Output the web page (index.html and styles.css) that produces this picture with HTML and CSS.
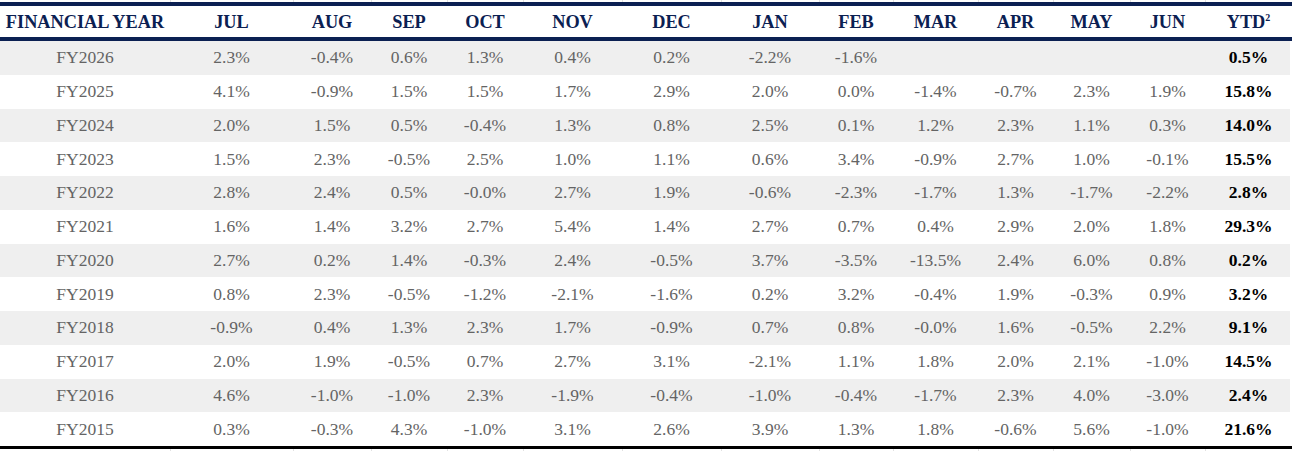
FILE: index.html
```html
<!DOCTYPE html>
<html lang="en">
<head>
<meta charset="utf-8">
<title>Monthly Returns</title>
<link rel="stylesheet" href="styles.css">
</head>
<body>
<table class="returns">
  <colgroup>
    <col class="c-year"><col class="c-jul"><col class="c-aug"><col class="c-sep"><col class="c-oct"><col class="c-nov"><col class="c-dec"><col class="c-jan"><col class="c-feb"><col class="c-mar"><col class="c-apr"><col class="c-may"><col class="c-jun"><col class="c-ytd">
  </colgroup>
  <thead>
    <tr class="edge"><td></td><td></td><td></td><td></td><td></td><td></td><td></td><td></td><td></td><td></td><td></td><td></td><td></td><td></td></tr>
    <tr class="head">
      <th>FINANCIAL YEAR</th><th>JUL</th><th>AUG</th><th>SEP</th><th>OCT</th><th>NOV</th><th>DEC</th><th>JAN</th><th>FEB</th><th>MAR</th><th>APR</th><th>MAY</th><th>JUN</th><th>YTD<sup>2</sup></th>
    </tr>
  </thead>
  <tbody>
    <tr><td>FY2026</td><td>2.3%</td><td>-0.4%</td><td>0.6%</td><td>1.3%</td><td>0.4%</td><td>0.2%</td><td>-2.2%</td><td>-1.6%</td><td></td><td></td><td></td><td></td><td class="ytd">0.5%</td></tr>
    <tr><td>FY2025</td><td>4.1%</td><td>-0.9%</td><td>1.5%</td><td>1.5%</td><td>1.7%</td><td>2.9%</td><td>2.0%</td><td>0.0%</td><td>-1.4%</td><td>-0.7%</td><td>2.3%</td><td>1.9%</td><td class="ytd">15.8%</td></tr>
    <tr><td>FY2024</td><td>2.0%</td><td>1.5%</td><td>0.5%</td><td>-0.4%</td><td>1.3%</td><td>0.8%</td><td>2.5%</td><td>0.1%</td><td>1.2%</td><td>2.3%</td><td>1.1%</td><td>0.3%</td><td class="ytd">14.0%</td></tr>
    <tr><td>FY2023</td><td>1.5%</td><td>2.3%</td><td>-0.5%</td><td>2.5%</td><td>1.0%</td><td>1.1%</td><td>0.6%</td><td>3.4%</td><td>-0.9%</td><td>2.7%</td><td>1.0%</td><td>-0.1%</td><td class="ytd">15.5%</td></tr>
    <tr><td>FY2022</td><td>2.8%</td><td>2.4%</td><td>0.5%</td><td>-0.0%</td><td>2.7%</td><td>1.9%</td><td>-0.6%</td><td>-2.3%</td><td>-1.7%</td><td>1.3%</td><td>-1.7%</td><td>-2.2%</td><td class="ytd">2.8%</td></tr>
    <tr><td>FY2021</td><td>1.6%</td><td>1.4%</td><td>3.2%</td><td>2.7%</td><td>5.4%</td><td>1.4%</td><td>2.7%</td><td>0.7%</td><td>0.4%</td><td>2.9%</td><td>2.0%</td><td>1.8%</td><td class="ytd">29.3%</td></tr>
    <tr><td>FY2020</td><td>2.7%</td><td>0.2%</td><td>1.4%</td><td>-0.3%</td><td>2.4%</td><td>-0.5%</td><td>3.7%</td><td>-3.5%</td><td>-13.5%</td><td>2.4%</td><td>6.0%</td><td>0.8%</td><td class="ytd">0.2%</td></tr>
    <tr><td>FY2019</td><td>0.8%</td><td>2.3%</td><td>-0.5%</td><td>-1.2%</td><td>-2.1%</td><td>-1.6%</td><td>0.2%</td><td>3.2%</td><td>-0.4%</td><td>1.9%</td><td>-0.3%</td><td>0.9%</td><td class="ytd">3.2%</td></tr>
    <tr><td>FY2018</td><td>-0.9%</td><td>0.4%</td><td>1.3%</td><td>2.3%</td><td>1.7%</td><td>-0.9%</td><td>0.7%</td><td>0.8%</td><td>-0.0%</td><td>1.6%</td><td>-0.5%</td><td>2.2%</td><td class="ytd">9.1%</td></tr>
    <tr><td>FY2017</td><td>2.0%</td><td>1.9%</td><td>-0.5%</td><td>0.7%</td><td>2.7%</td><td>3.1%</td><td>-2.1%</td><td>1.1%</td><td>1.8%</td><td>2.0%</td><td>2.1%</td><td>-1.0%</td><td class="ytd">14.5%</td></tr>
    <tr><td>FY2016</td><td>4.6%</td><td>-1.0%</td><td>-1.0%</td><td>2.3%</td><td>-1.9%</td><td>-0.4%</td><td>-1.0%</td><td>-0.4%</td><td>-1.7%</td><td>2.3%</td><td>4.0%</td><td>-3.0%</td><td class="ytd">2.4%</td></tr>
    <tr><td>FY2015</td><td>0.3%</td><td>-0.3%</td><td>4.3%</td><td>-1.0%</td><td>3.1%</td><td>2.6%</td><td>3.9%</td><td>1.3%</td><td>1.8%</td><td>-0.6%</td><td>5.6%</td><td>-1.0%</td><td class="ytd">21.6%</td></tr>
  </tbody>
  <tfoot>
    <tr class="edge"><td></td><td></td><td></td><td></td><td></td><td></td><td></td><td></td><td></td><td></td><td></td><td></td><td></td><td></td></tr>
  </tfoot>
</table>
</body>
</html>
```

FILE: styles.css
```css
html, body {
  margin: 0;
  padding: 0;
  background: #ffffff;
}

.returns {
  width: 1292px;
  table-layout: fixed;
  border-collapse: collapse;
  font-family: "Liberation Serif", "Times New Roman", Tinos, "DejaVu Serif", serif;
  font-size: 17px;
}

.c-year { width: 170px; }
.c-jul { width: 123px; }
.c-aug { width: 78px; }
.c-sep { width: 76px; }
.c-oct { width: 76px; }
.c-nov { width: 99px; }
.c-dec { width: 99px; }
.c-jan { width: 98px; }
.c-feb { width: 74px; }
.c-mar { width: 85px; }
.c-apr { width: 75px; }
.c-may { width: 77px; }
.c-jun { width: 75px; }
.c-ytd { width: 87px; }

.returns td,
.returns th {
  padding: 0;
  text-align: center;
  vertical-align: middle;
  white-space: nowrap;
  font-family: "Liberation Serif", "Times New Roman", Tinos, "DejaVu Serif", serif;
}

.edge td {
  height: 2px;
  border-right: 1px solid #e2e2e2;
}

.head th {
  height: 30px;
  padding-top: 1px;
  color: #0b2052;
  font-weight: bold;
  font-size: 18.3px;
  border-top: 4px solid #0b2052;
  border-bottom: 4px solid #0b2052;
}

.head sup {
  font-size: 10px;
  line-height: 0;
  vertical-align: 7px;
}

.returns tbody td {
  height: 33.75px;
  color: #646464;
  font-size: 17.5px;
  font-weight: normal;
}

.returns tbody tr:nth-child(odd) td {
  background: #efefef;
}

.returns tbody tr:last-child td {
  border-bottom: 3px solid #000000;
}

.returns tbody td.ytd {
  color: #000000;
  font-weight: bold;
  box-shadow: inset -2px 0 0 #ffffff;
}
```
